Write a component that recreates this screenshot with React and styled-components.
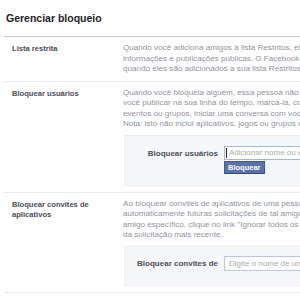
import styled, { createGlobalStyle } from "styled-components";

const GlobalStyle = createGlobalStyle`
  html, body {
    margin: 0;
    padding: 0;
    background: #fff;
    overflow: hidden;
  }
  body {
    font-family: "Liberation Sans", Arial, sans-serif;
    -webkit-font-smoothing: antialiased;
  }
`;

const sections = [
  {
    label: ["Lista restrita"],
    text: [
      "Quando você adiciona amigos à lista Restritos, eles só poderão ver suas",
      "informações e publicações públicas. O Facebook não avisa seus amigos",
      "quando eles são adicionados a sua lista Restritos.",
    ],
  },
  {
    label: ["Bloquear usuários"],
    text: [
      "Quando você bloqueia alguém, essa pessoa não pode mais ver as coisas que",
      "você publicar na sua linha do tempo, marcá-la, convidá-la para",
      "eventos ou grupos, iniciar uma conversa com você ou adicioná-la como amigo.",
      "Nota: isto não inclui aplicativos, jogos ou grupos dos quais vocês dois participam.",
    ],
    form: {
      label: "Bloquear usuários",
      placeholder: "Adicionar nome ou e-mail",
      focused: true,
      button: "Bloquear",
    },
  },
  {
    label: ["Bloquear convites de", "aplicativos"],
    text: [
      "Ao bloquear convites de aplicativos de uma pessoa, você irá ignorar",
      "automaticamente futuras solicitações de tal amigo. Para bloquear convites de um",
      "amigo específico, clique no link \"Ignorar todos os convites deste amigo\" abaixo",
      "da solicitação mais recente.",
    ],
    form: {
      label: "Bloquear convites de",
      placeholder: "Digite o nome de um amigo",
    },
  },
];

const App = () => {
  const SectionList = sections.map((section, idx) => (
    <Row key={idx}>
      <Label>
        {section.label.map((line, i) => (
          <div key={i}>{line}</div>
        ))}
      </Label>
      <Content>
        <Description>
          {section.text.map((line, i) => (
            <div key={i}>{line}</div>
          ))}
        </Description>
        {section.form && (
          <FormBox $hasButton={!!section.form.button}>
            <FormLabel>{section.form.label}</FormLabel>
            <Field>
              <InputWrap>
                <Input
                  $focused={section.form.focused}
                  $tall={!section.form.button}
                  placeholder={section.form.placeholder}
                  readOnly
                />
                {section.form.focused && <Caret />}
              </InputWrap>
              {section.form.button && (
                <Button>{section.form.button}</Button>
              )}
            </Field>
          </FormBox>
        )}
      </Content>
    </Row>
  ));

  return (
    <>
      <GlobalStyle />
      <Page>
        <Title>Gerenciar bloqueio</Title>
        <Sections>{SectionList}</Sections>
      </Page>
    </>
  );
};

const Page = styled.div`
  width: 640px;
  padding: 0 0 0 4px;
`;

const Title = styled.div`
  font-size: 10.5px;
  font-weight: bold;
  color: #1d2129;
  line-height: 14px;
  padding: 11px 0 11px 2px;
`;

const Sections = styled.div`
  border-top: 1px solid #c9ccd1;
`;

const Row = styled.div`
  display: grid;
  grid-template-columns: 111px 1fr;
  padding: 6px 0 6px 8px;
  border-bottom: 1px solid #e9ebee;
`;

const Label = styled.div`
  font-size: 7.6px;
  font-weight: bold;
  color: #4b4f56;
  line-height: 10px;
  padding-top: 1px;
`;

const Content = styled.div`
  display: flex;
  flex-direction: column;
`;

const Description = styled.div`
  font-size: 8.1px;
  line-height: 10.5px;
  color: #90949c;
  white-space: nowrap;
`;

const FormBox = styled.div`
  margin-top: 5px;
  margin-left: 1px;
  display: grid;
  grid-template-columns: 93px 1fr;
  column-gap: 6px;
  align-items: start;
  padding: ${(props) => (props.$hasButton ? "10px 0 11px" : "9px 0 14px")};
  background: #f6f7f9;
  border: 1px solid #eceef1;
  border-right: none;
`;

const FormLabel = styled.div`
  text-align: right;
  font-size: 8px;
  font-weight: bold;
  color: #4b4f56;
  line-height: 15px;
`;

const Field = styled.div`
  display: flex;
  flex-direction: column;
  align-items: flex-start;
  gap: 1px;
`;

const InputWrap = styled.div`
  position: relative;
  display: flex;
`;

const Input = styled.input`
  display: block;
  box-sizing: border-box;
  width: 220px;
  height: ${(props) => (props.$tall ? "15px" : "14px")};
  margin: 0;
  padding: 0 0 0 4px;
  font-family: "Liberation Sans", Arial, sans-serif;
  font-size: 8px;
  background: #fff;
  border: 1px solid ${(props) => (props.$focused ? "#a9b6d1" : "#bdc7d8")};
  outline: none;
  &::placeholder {
    color: #a7abb1;
  }
`;

const Caret = styled.span`
  position: absolute;
  left: 2px;
  top: 2px;
  width: 1px;
  height: 10px;
  background: #1d2129;
`;

const Button = styled.div`
  box-sizing: border-box;
  height: 13px;
  padding: 0 3px;
  font-size: 7.5px;
  font-weight: bold;
  line-height: 11px;
  color: #fff;
  background: #5b74a8;
  border: 1px solid #3b5998;
  border-bottom-color: #2e4a86;
`;

export default App;
